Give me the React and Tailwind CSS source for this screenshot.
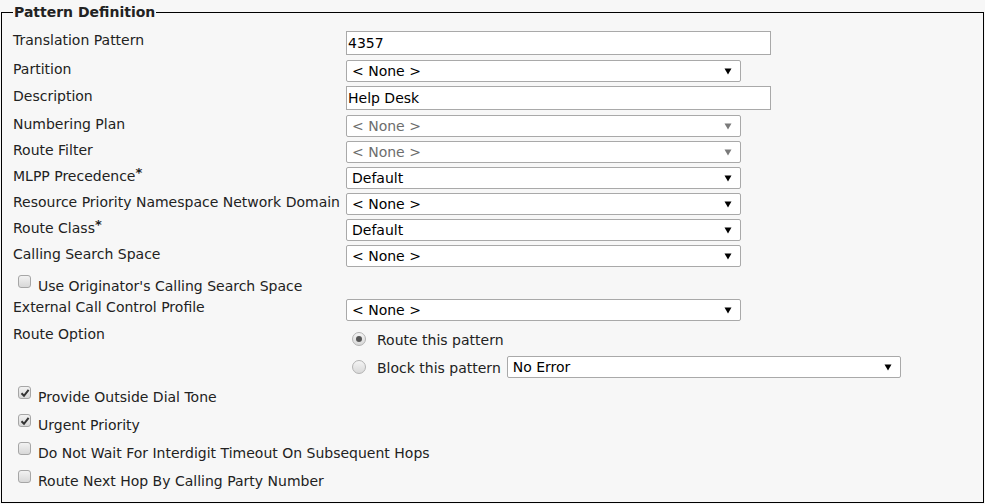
import React from "react";

const font = { fontFamily: '"DejaVu Sans", Verdana, sans-serif' };

function Arrow({ disabled }) {
  return (
    <svg width="8" height="7" viewBox="0 0 8 7" className="shrink-0">
      <path d="M0.5 0.5 H7.5 L4 6.5 Z" fill={disabled ? "#7a7a7a" : "#000"} />
    </svg>
  );
}

function Select({ value, disabled, w = "w-[395px]" }) {
  return (
    <div
      className={`${w} h-[22px] bg-white border border-[#a9a9a9] rounded-[2px] flex items-center justify-between pl-[5px] pr-[8px] text-[14px] leading-[16px] ${
        disabled ? "text-[#6d6d6d]" : "text-black"
      }`}
    >
      <span>{value}</span>
      <Arrow disabled={disabled} />
    </div>
  );
}

function TextInput({ value }) {
  return (
    <div className="w-[425px] h-[24px] bg-white border border-[#a9a9a9] flex items-center pl-[1px] text-[14px] leading-[16px] text-black">
      {value}
    </div>
  );
}

function Label({ children, star, mt = "mt-[3px]" }) {
  return (
    <div className={`w-[333px] shrink-0 ${mt} leading-[16px] text-[14px] text-[#222] whitespace-nowrap`}>
      {children}
      {star && <span className="relative -top-[4px] font-bold text-[13px]">*</span>}
    </div>
  );
}

function Checkbox({ checked }) {
  return (
    <span className="w-[13px] h-[13px] shrink-0 rounded-[3px] border border-[#a6a6a6] bg-gradient-to-b from-[#f2f2f2] to-[#d8d8d8] flex items-center justify-center">
      {checked && (
        <svg width="10" height="10" viewBox="0 0 10 10">
          <path d="M1.5 5.2 L4 7.8 L8.6 1.8" stroke="#333" strokeWidth="2" fill="none" />
        </svg>
      )}
    </span>
  );
}

function Radio({ checked }) {
  return (
    <span className="w-[14px] h-[14px] shrink-0 rounded-full border border-[#b3b3b3] bg-gradient-to-b from-[#f4f4f4] to-[#d9d9d9] flex items-center justify-center">
      {checked && <span className="w-[6px] h-[6px] rounded-full bg-[#555]" />}
    </span>
  );
}

function CheckRow({ checked, children }) {
  return (
    <div className="h-[28px] flex items-start pl-[5px] text-[14px] text-[#222]">
      <span className="mt-[5px]">
        <Checkbox checked={checked} />
      </span>
      <span className="leading-[16px] mt-[8px] ml-[7px]">{children}</span>
    </div>
  );
}

function SelRow({ label, star, value, disabled }) {
  return (
    <div className="h-[26px] flex items-start">
      <Label star={star}>{label}</Label>
      <div className="mt-[2px]">
        <Select value={value} disabled={disabled} />
      </div>
    </div>
  );
}

export default function App() {
  return (
    <div className="w-[985px] h-[504px] bg-[#f7f7f7] pt-[4px] pl-[1px]" style={font}>
      <fieldset className="w-[983px] h-[499px] border border-black pl-[11px]">
        <legend className="px-[1px] text-[14px] leading-[16px] font-bold text-[#222]">
          Pattern Definition
        </legend>
        <div className="pt-[9px]">
          <div className="h-[29px] flex items-start">
            <Label>Translation Pattern</Label>
            <div className="mt-[2px]">
              <TextInput value="4357" />
            </div>
          </div>
          <SelRow label="Partition" value="< None >" />
          <div className="h-[29px] flex items-start">
            <Label mt="mt-[4px]">Description</Label>
            <div className="mt-[2px]">
              <TextInput value="Help Desk" />
            </div>
          </div>
          <SelRow label="Numbering Plan" value="< None >" disabled />
          <SelRow label="Route Filter" value="< None >" disabled />
          <SelRow label="MLPP Precedence" star value="Default" />
          <SelRow label="Resource Priority Namespace Network Domain" value="< None >" />
          <SelRow label="Route Class" star value="Default" />
          <SelRow label="Calling Search Space" value="< None >" />
          <div className="h-[28px] flex items-start pl-[5px] text-[14px] text-[#222]">
            <span className="mt-[6px]">
              <Checkbox />
            </span>
            <span className="leading-[16px] mt-[9px] ml-[7px]">Use Originator's Calling Search Space</span>
          </div>
          <div className="h-[26px] flex items-start">
            <Label mt="mt-[2px]">External Call Control Profile</Label>
            <div className="mt-[2px]">
              <Select value="< None >" />
            </div>
          </div>
          <div className="flex items-start">
            <Label mt="mt-[3px]">Route Option</Label>
            <div className="flex flex-col pl-[6px]">
              <div className="h-[32px] flex items-center text-[14px] text-[#222]">
                <Radio checked />
                <span className="leading-[16px] ml-[11px] mt-[2px]">Route this pattern</span>
              </div>
              <div className="h-[24px] flex items-center text-[14px] text-[#222]">
                <Radio />
                <span className="leading-[16px] ml-[11px] mt-[2px]">Block this pattern</span>
                <div className="ml-[6px]">
                  <Select value="No Error" w="w-[394px]" />
                </div>
              </div>
            </div>
          </div>
          <div className="pt-[2px]">
            <CheckRow checked>Provide Outside Dial Tone</CheckRow>
            <CheckRow checked>Urgent Priority</CheckRow>
            <CheckRow>Do Not Wait For Interdigit Timeout On Subsequent Hops</CheckRow>
            <CheckRow>Route Next Hop By Calling Party Number</CheckRow>
          </div>
        </div>
      </fieldset>
    </div>
  );
}
